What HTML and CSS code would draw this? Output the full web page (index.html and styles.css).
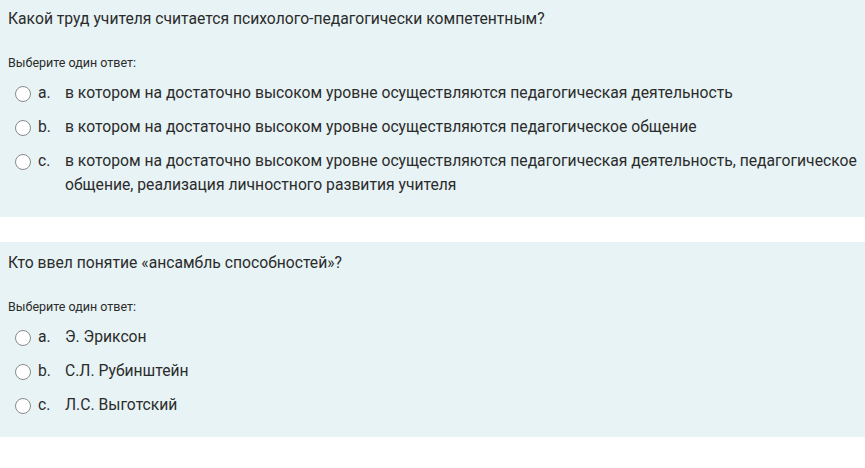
FILE: index.html
```html
<!DOCTYPE html>
<html lang="ru">
<head>
    <meta charset="UTF-8">
    <meta name="viewport" content="width=device-width, initial-scale=1.0">
    <title>Тест</title>
    <link rel="stylesheet" href="styles.css">
</head>
<body>

<div class="quiz">
    <div class="que">
        <div class="qtext">Какой труд учителя считается психолого-педагогически компетентным?</div>
        <div class="prompt">Выберите один ответ:</div>
        <div class="answer">
            <div class="r">
                <span class="radio"></span>
                <span class="num">a.</span>
                <span class="text">в котором на достаточно высоком уровне осуществляются педагогическая деятельность</span>
            </div>
            <div class="r">
                <span class="radio"></span>
                <span class="num">b.</span>
                <span class="text">в котором на достаточно высоком уровне осуществляются педагогическое общение</span>
            </div>
            <div class="r">
                <span class="radio"></span>
                <span class="num">c.</span>
                <span class="text">в котором на достаточно высоком уровне осуществляются педагогическая деятельность, педагогическое общение, реализация личностного развития учителя</span>
            </div>
        </div>
    </div>

    <div class="que">
        <div class="qtext">Кто ввел понятие «ансамбль способностей»?</div>
        <div class="prompt">Выберите один ответ:</div>
        <div class="answer">
            <div class="r">
                <span class="radio"></span>
                <span class="num">a.</span>
                <span class="text">Э. Эриксон</span>
            </div>
            <div class="r">
                <span class="radio"></span>
                <span class="num">b.</span>
                <span class="text">С.Л. Рубинштейн</span>
            </div>
            <div class="r">
                <span class="radio"></span>
                <span class="num">c.</span>
                <span class="text">Л.С. Выготский</span>
            </div>
        </div>
    </div>
</div>

</body>
</html>
```

FILE: styles.css
```css
body {
    font-family: Roboto, "Noto Sans", Arial, sans-serif;
    background-color: #fff;
    color: #2b2b2b;
    margin: 0;
}

.quiz {
    margin-top: -2px;
}

.que {
    background-color: #e7f3f5;
    padding: 9px 0 15px 8px;
    margin-bottom: 25px;
}

.qtext {
    font-size: 15.7px;
    line-height: 24px;
}

.prompt {
    font-size: 12.5px;
    line-height: 18px;
    margin-top: 23px;
}

.answer {
    margin-top: 4px;
}

.r {
    display: flex;
    align-items: flex-start;
    padding: 5px 0 5px 7px;
    font-size: 15.7px;
    line-height: 24px;
}

.radio {
    flex: none;
    width: 14px;
    height: 14px;
    border: 1px solid #8a8a8a;
    border-radius: 50%;
    background-color: #fff;
    margin-top: 5px;
    margin-right: 7px;
}

.num {
    flex: none;
    width: 27px;
}

.text {
    flex: 1;
}
```
